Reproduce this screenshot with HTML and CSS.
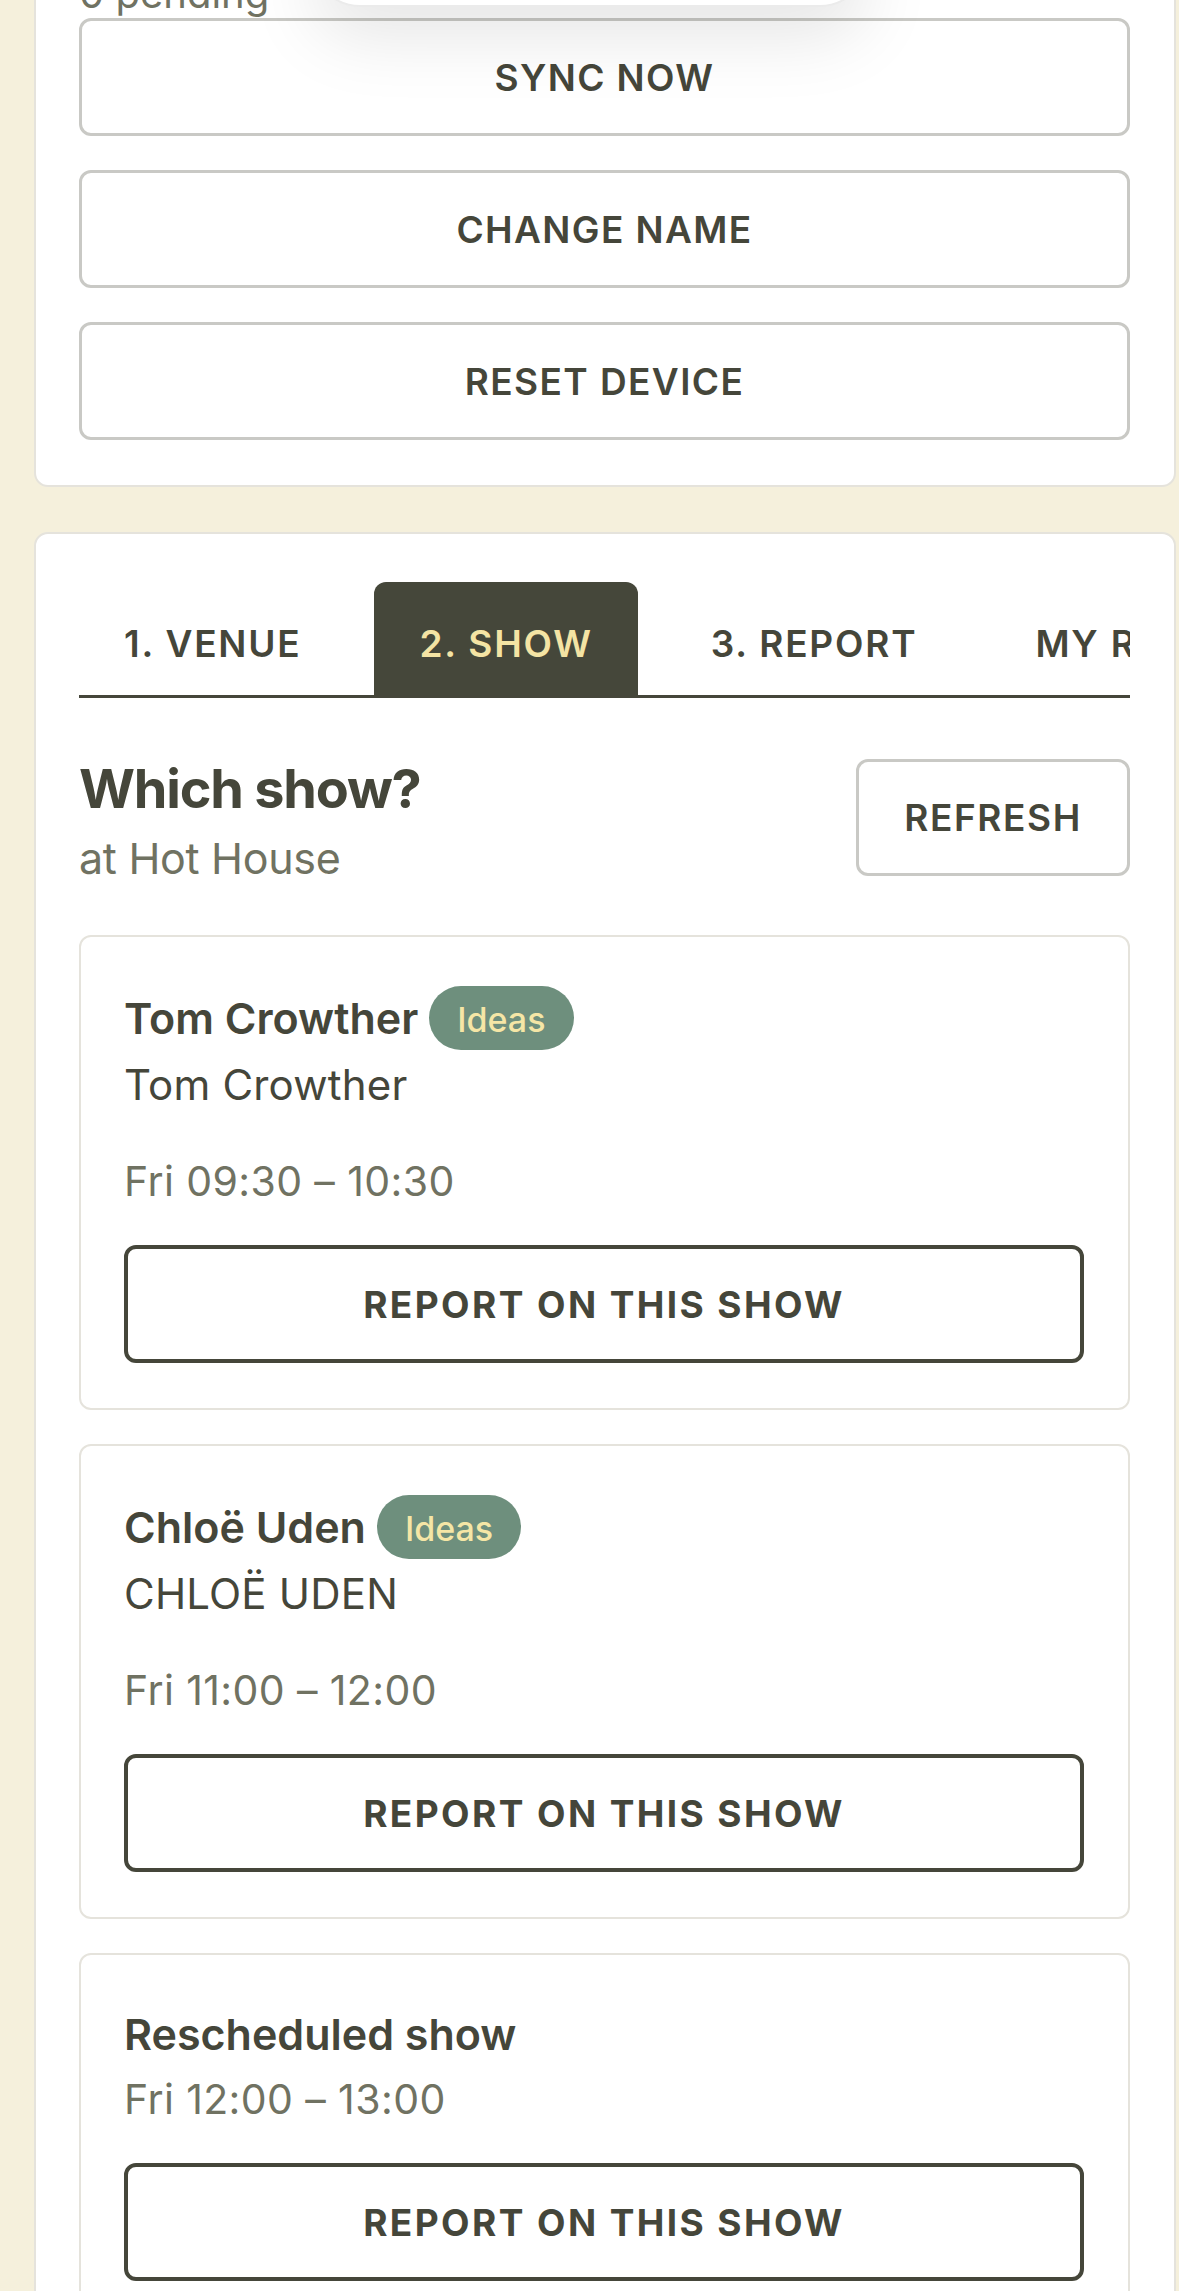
FILE: index.html
```html
<!DOCTYPE html>
<html lang="en">
<head>
<meta charset="utf-8">
<title>Which show?</title>
<link rel="stylesheet" href="styles.css">
</head>
<body>
<div class="toast" aria-hidden="true"></div>
<main class="page">
  <section class="card device-card">
    <p class="status">0 pending</p>
    <div class="actions">
      <button class="btn btn-light">SYNC NOW</button>
      <button class="btn btn-light">CHANGE NAME</button>
      <button class="btn btn-light">RESET DEVICE</button>
    </div>
  </section>

  <section class="card flow-card">
    <nav class="tabs">
      <span class="tab">1. VENUE</span>
      <span class="tab tab-active">2. SHOW</span>
      <span class="tab">3. REPORT</span>
      <span class="tab">MY REPORTS</span>
    </nav>

    <header class="section-head">
      <div class="head-text">
        <h1 class="heading">Which show?</h1>
        <p class="subheading">at Hot House</p>
      </div>
      <button class="btn btn-light btn-refresh">REFRESH</button>
    </header>

    <div class="show-list">
      <article class="show">
        <div class="show-title-row">
          <h2 class="show-title">Tom Crowther</h2>
          <span class="badge">Ideas</span>
        </div>
        <p class="show-artist">Tom Crowther</p>
        <p class="show-time">Fri 09:30 – 10:30</p>
        <button class="btn btn-dark">REPORT ON THIS SHOW</button>
      </article>

      <article class="show">
        <div class="show-title-row">
          <h2 class="show-title">Chloë Uden</h2>
          <span class="badge">Ideas</span>
        </div>
        <p class="show-artist">CHLOË UDEN</p>
        <p class="show-time">Fri 11:00 – 12:00</p>
        <button class="btn btn-dark">REPORT ON THIS SHOW</button>
      </article>

      <article class="show">
        <div class="show-title-row">
          <h2 class="show-title">Rescheduled show</h2>
        </div>
        <p class="show-time">Fri 12:00 – 13:00</p>
        <button class="btn btn-dark">REPORT ON THIS SHOW</button>
      </article>
    </div>
  </section>
</main>
</body>
</html>
```

FILE: styles.css
```css
* {
  box-sizing: border-box;
}

html, body {
  margin: 0;
  padding: 0;
}

body {
  background: #f5f0dc;
  font-family: Inter, "Noto Sans", "Liberation Sans", sans-serif;
  color: #45463a;
  overflow: hidden;
  height: 2291px;
}

.page {
  width: 1176px;
  padding-left: 34px;
}

.card {
  background: #ffffff;
  border: 2px solid #e5e3dc;
  border-radius: 14px;
  padding: 45px 44px 45px 43px;
}

/* top card, scrolled mostly out of view */
.device-card {
  margin-top: -77px;
}

.status {
  margin: 0;
  font-size: 40px;
  line-height: 48px;
  color: #707262;
}

.actions {
  display: flex;
  flex-direction: column;
  gap: 34px;
}

.btn {
  display: flex;
  align-items: center;
  justify-content: center;
  width: 100%;
  height: 118px;
  margin: 0;
  padding: 0;
  background: #ffffff;
  border-radius: 12px;
  font-family: inherit;
  font-size: 37px;
  font-weight: 600;
  letter-spacing: 1.4px;
  color: #45463a;
  cursor: pointer;
}

.btn-light {
  border: 3px solid #c9c9c5;
}

.btn-dark {
  border: 4px solid #45463a;
  font-weight: 700;
  letter-spacing: 2.4px;
}

/* toast overlay at the top of the viewport */
.toast {
  position: absolute;
  top: -90px;
  left: 312px;
  width: 556px;
  height: 97px;
  border-radius: 48px;
  background: #ffffff;
  border: 2px solid #ebebeb;
  box-shadow: 0 30px 70px rgba(0, 0, 0, 0.10);
  z-index: 5;
}

.flow-card {
  margin-top: 45px;
  min-height: 1900px;
}

.tabs {
  display: flex;
  gap: 28px;
  padding-top: 3px;
  border-bottom: 3px solid #45463a;
  overflow: hidden;
  white-space: nowrap;
}

.tab {
  flex-shrink: 0;
  display: flex;
  align-items: center;
  height: 113px;
  padding: 10px 45px 0;
  font-size: 37px;
  font-weight: 600;
  letter-spacing: 1.8px;
  color: #45463a;
  border-radius: 12px 12px 0 0;
}

.tab-active {
  background: #45473a;
  color: #f4e4a4;
}

.section-head {
  display: flex;
  justify-content: space-between;
  align-items: flex-start;
  margin-top: 61px;
}

.heading {
  margin: 0;
  font-size: 54px;
  line-height: 1.12;
  font-weight: 700;
  letter-spacing: -1.2px;
  color: #45463a;
}

.subheading {
  margin: 11px 0 0;
  font-size: 43px;
  line-height: 56px;
  letter-spacing: -0.3px;
  color: #707262;
}

.btn-refresh {
  width: 274px;
  height: 117px;
  flex-shrink: 0;
  letter-spacing: 1.6px;
}

.show-list {
  display: flex;
  flex-direction: column;
  gap: 34px;
  margin-top: 49px;
}

.show {
  border: 2px solid #e5e3dc;
  border-radius: 12px;
  padding: 49px 44px 45px 43px;
}

.show-title-row {
  display: flex;
  align-items: center;
  gap: 11px;
  margin-bottom: 7px;
}

.show-title {
  margin: 0;
  font-size: 43px;
  line-height: 60px;
  font-weight: 600;
  letter-spacing: 0;
  color: #45463a;
}

.badge {
  display: inline-flex;
  align-items: center;
  height: 64px;
  padding: 3px 28px 0;
  border-radius: 32px;
  background: #6e8f7d;
  color: #f5e6a6;
  font-size: 34px;
  font-weight: 500;
}

.show-artist {
  margin: 0 0 40px;
  font-size: 42px;
  line-height: 56px;
  letter-spacing: 0.2px;
  color: #45463a;
}

.show-time {
  margin: 0 0 36px;
  font-size: 41px;
  line-height: 56px;
  letter-spacing: 0.4px;
  color: #707262;
}
```
